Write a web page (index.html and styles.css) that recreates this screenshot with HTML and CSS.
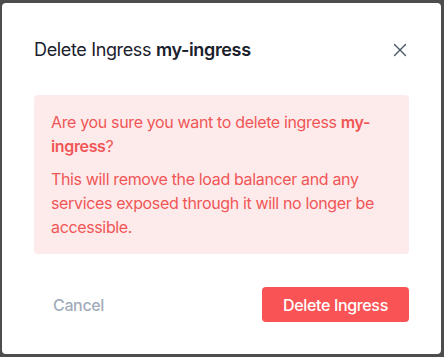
FILE: index.html
```html
<!DOCTYPE html>
<html>
<head>
<meta charset="utf-8">
<link rel="stylesheet" href="styles.css">
</head>
<body>
<div class="overlay">
  <div class="dialog">
    <div class="header">
      <h2 class="title">Delete Ingress <strong>my-ingress</strong></h2>
      <button class="close" aria-label="Close">
        <svg width="14" height="14" viewBox="0 0 14 14"><path d="M1.5 1.5 L12.5 12.5 M12.5 1.5 L1.5 12.5" stroke="#4a5568" stroke-width="1.4" stroke-linecap="round" fill="none"/></svg>
      </button>
    </div>
    <div class="alert">
      <p>Are you sure you want to delete ingress <strong>my-ingress</strong>?</p>
      <p>This will remove the load balancer and any services exposed through it will no longer be accessible.</p>
    </div>
    <div class="footer">
      <button class="cancel">Cancel</button>
      <button class="danger">Delete Ingress</button>
    </div>
  </div>
</div>
</body>
</html>
```
FILE: styles.css
```css
html, body { margin: 0; padding: 0; }
body {
  background: #4d4d4d;
  font-family: Inter, "Noto Sans", sans-serif;
  letter-spacing: -0.022em;
  width: 444px;
  height: 357px;
  overflow: hidden;
}
.overlay {
  padding: 3px 3px 3px 2px;
  height: 357px;
  box-sizing: border-box;
}
.dialog {
  background: #fff;
  border-radius: 4px;
  height: 351px;
  box-sizing: border-box;
  padding: 33px 32px 32px 32px;
  display: flex;
  flex-direction: column;
}
.header {
  display: flex;
  align-items: center;
  justify-content: space-between;
  height: 28px;
}
.title {
  margin: 0;
  font-size: 18px;
  font-weight: 400;
  line-height: 28px;
  color: #1a202c;
}
.title strong { font-weight: 600; }
.close {
  border: 0;
  background: none;
  padding: 0;
  margin-right: 2px;
  display: flex;
}
.alert {
  margin-top: 31px;
  background: #fdebec;
  border-radius: 4px;
  padding: 15px 16px 15px 17px;
  color: #f05656;
  font-size: 16px;
  line-height: 24px;
}
.alert p { margin: 0; }
.alert p + p { margin-top: 9px; }
.alert strong { font-weight: 600; }
.footer {
  margin-top: 33px;
  display: flex;
  justify-content: space-between;
  align-items: center;
}
.cancel {
  border: 0;
  background: none;
  font-family: inherit;
  letter-spacing: inherit;
  font-size: 16px;
  font-weight: 500;
  color: #a3adba;
  padding: 0 19px;
  height: 35px;
}
.danger {
  border: 0;
  background: #f95355;
  color: #fff;
  font-family: inherit;
  letter-spacing: inherit;
  font-size: 16px;
  font-weight: 500;
  border-radius: 4px;
  height: 35px;
  padding: 0;
  width: 147px;
  white-space: nowrap;
}
```
